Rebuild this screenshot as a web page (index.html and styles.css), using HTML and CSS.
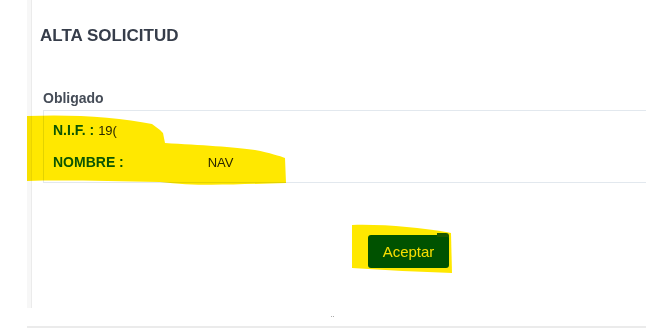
FILE: index.html
```html
<!DOCTYPE html>
<html lang="es">
<head>
    <meta charset="UTF-8">
    <meta name="viewport" content="width=device-width, initial-scale=1.0">
    <title>Alta Solicitud</title>
    <link rel="stylesheet" href="styles.css">
</head>
<body>

<div class="frame">
    <div class="panel">
        <h1 class="title">ALTA SOLICITUD</h1>

        <div class="section">
            <div class="section-label">Obligado</div>
            <div class="section-box">
                <div class="row">
                    <span class="field">N.I.F. :</span>
                    <span class="value">19(</span>
                </div>
                <div class="row">
                    <span class="field">NOMBRE :</span>
                    <span class="value value-name">NAV</span>
                </div>
            </div>
        </div>

        <div class="actions">
            <button class="btn-accept">Aceptar</button>
        </div>
    </div>
</div>

<div class="footer"><span class="mark">¨</span></div>

<!-- marcas de rotulador encima de los datos -->
<svg class="marker" width="646" height="328" viewBox="0 0 646 328">
    <path d="M27,116 C70,114 120,117 152,124 L160,130 L163,133 L165,143 C200,145 235,147 255,150 C270,153 280,156 285,158 L286,183 C240,184 200,187 160,182 C110,181 60,180 27,181 Z"/>
    <path d="M352,225 C385,224 420,228 446,232 L451,233 L452,273 C420,272 385,270 352,268 Z"/>
</svg>

</body>
</html>
```

FILE: styles.css
```css
* {
  box-sizing: border-box;
}
body {
  margin: 0;
  background-color: #fff;
  font-family: "Liberation Sans", Arial, sans-serif;
  position: relative;
  overflow: hidden;
}
.frame {
  margin-left: 27px;
  height: 308px;
  border-left: 4px solid #f7f7f7;
}
.panel {
  height: 100%;
  border-left: 1px solid #ebebeb;
  padding: 26px 0 0 8px;
}
.title {
  margin: 0;
  font-size: 17px;
  line-height: 20px;
  font-weight: bold;
  color: #363d4a;
}
.section {
  margin: 44px 0 0 3px;
}
.section-label {
  font-size: 14px;
  line-height: 16px;
  font-weight: bold;
  color: #454c57;
  margin-bottom: 4px;
}
.section-box {
  border: 1px solid #e2e8ee;
  border-right: none;
  padding: 11px 0 12px 9px;
}
.row {
  font-size: 14px;
  line-height: 16px;
  height: 16px;
}
.row + .row {
  margin-top: 16px;
}
.field {
  font-weight: bold;
  color: #0b5d0b;
}
.value {
  color: #2a2a2a;
  font-size: 13px;
}
.value-name {
  margin-left: 80px;
}
.actions {
  margin: 52px 0 0 328px;
}
.btn-accept {
  position: relative;
  width: 81px;
  height: 33px;
  border: none;
  border-radius: 3px;
  background-color: #005a00;
  color: #f7f500;
  font-family: "Liberation Sans", Arial, sans-serif;
  font-size: 15px;
  padding: 0;
}
.btn-accept::before {
  content: "";
  position: absolute;
  top: -2px;
  right: 0;
  width: 12px;
  height: 4px;
  background-color: #1b5fb8;
  border-top-right-radius: 3px;
}
.footer {
  margin: 17px 0 0 27px;
  height: 3px;
  border-bottom: 2px solid #ebebeb;
  position: relative;
}
.mark {
  position: absolute;
  left: 304px;
  top: -10px;
  font-size: 10px;
  color: #999;
}
.marker {
  position: absolute;
  top: 0;
  left: 0;
  fill: #ffe800;
  mix-blend-mode: multiply;
  pointer-events: none;
}
```
